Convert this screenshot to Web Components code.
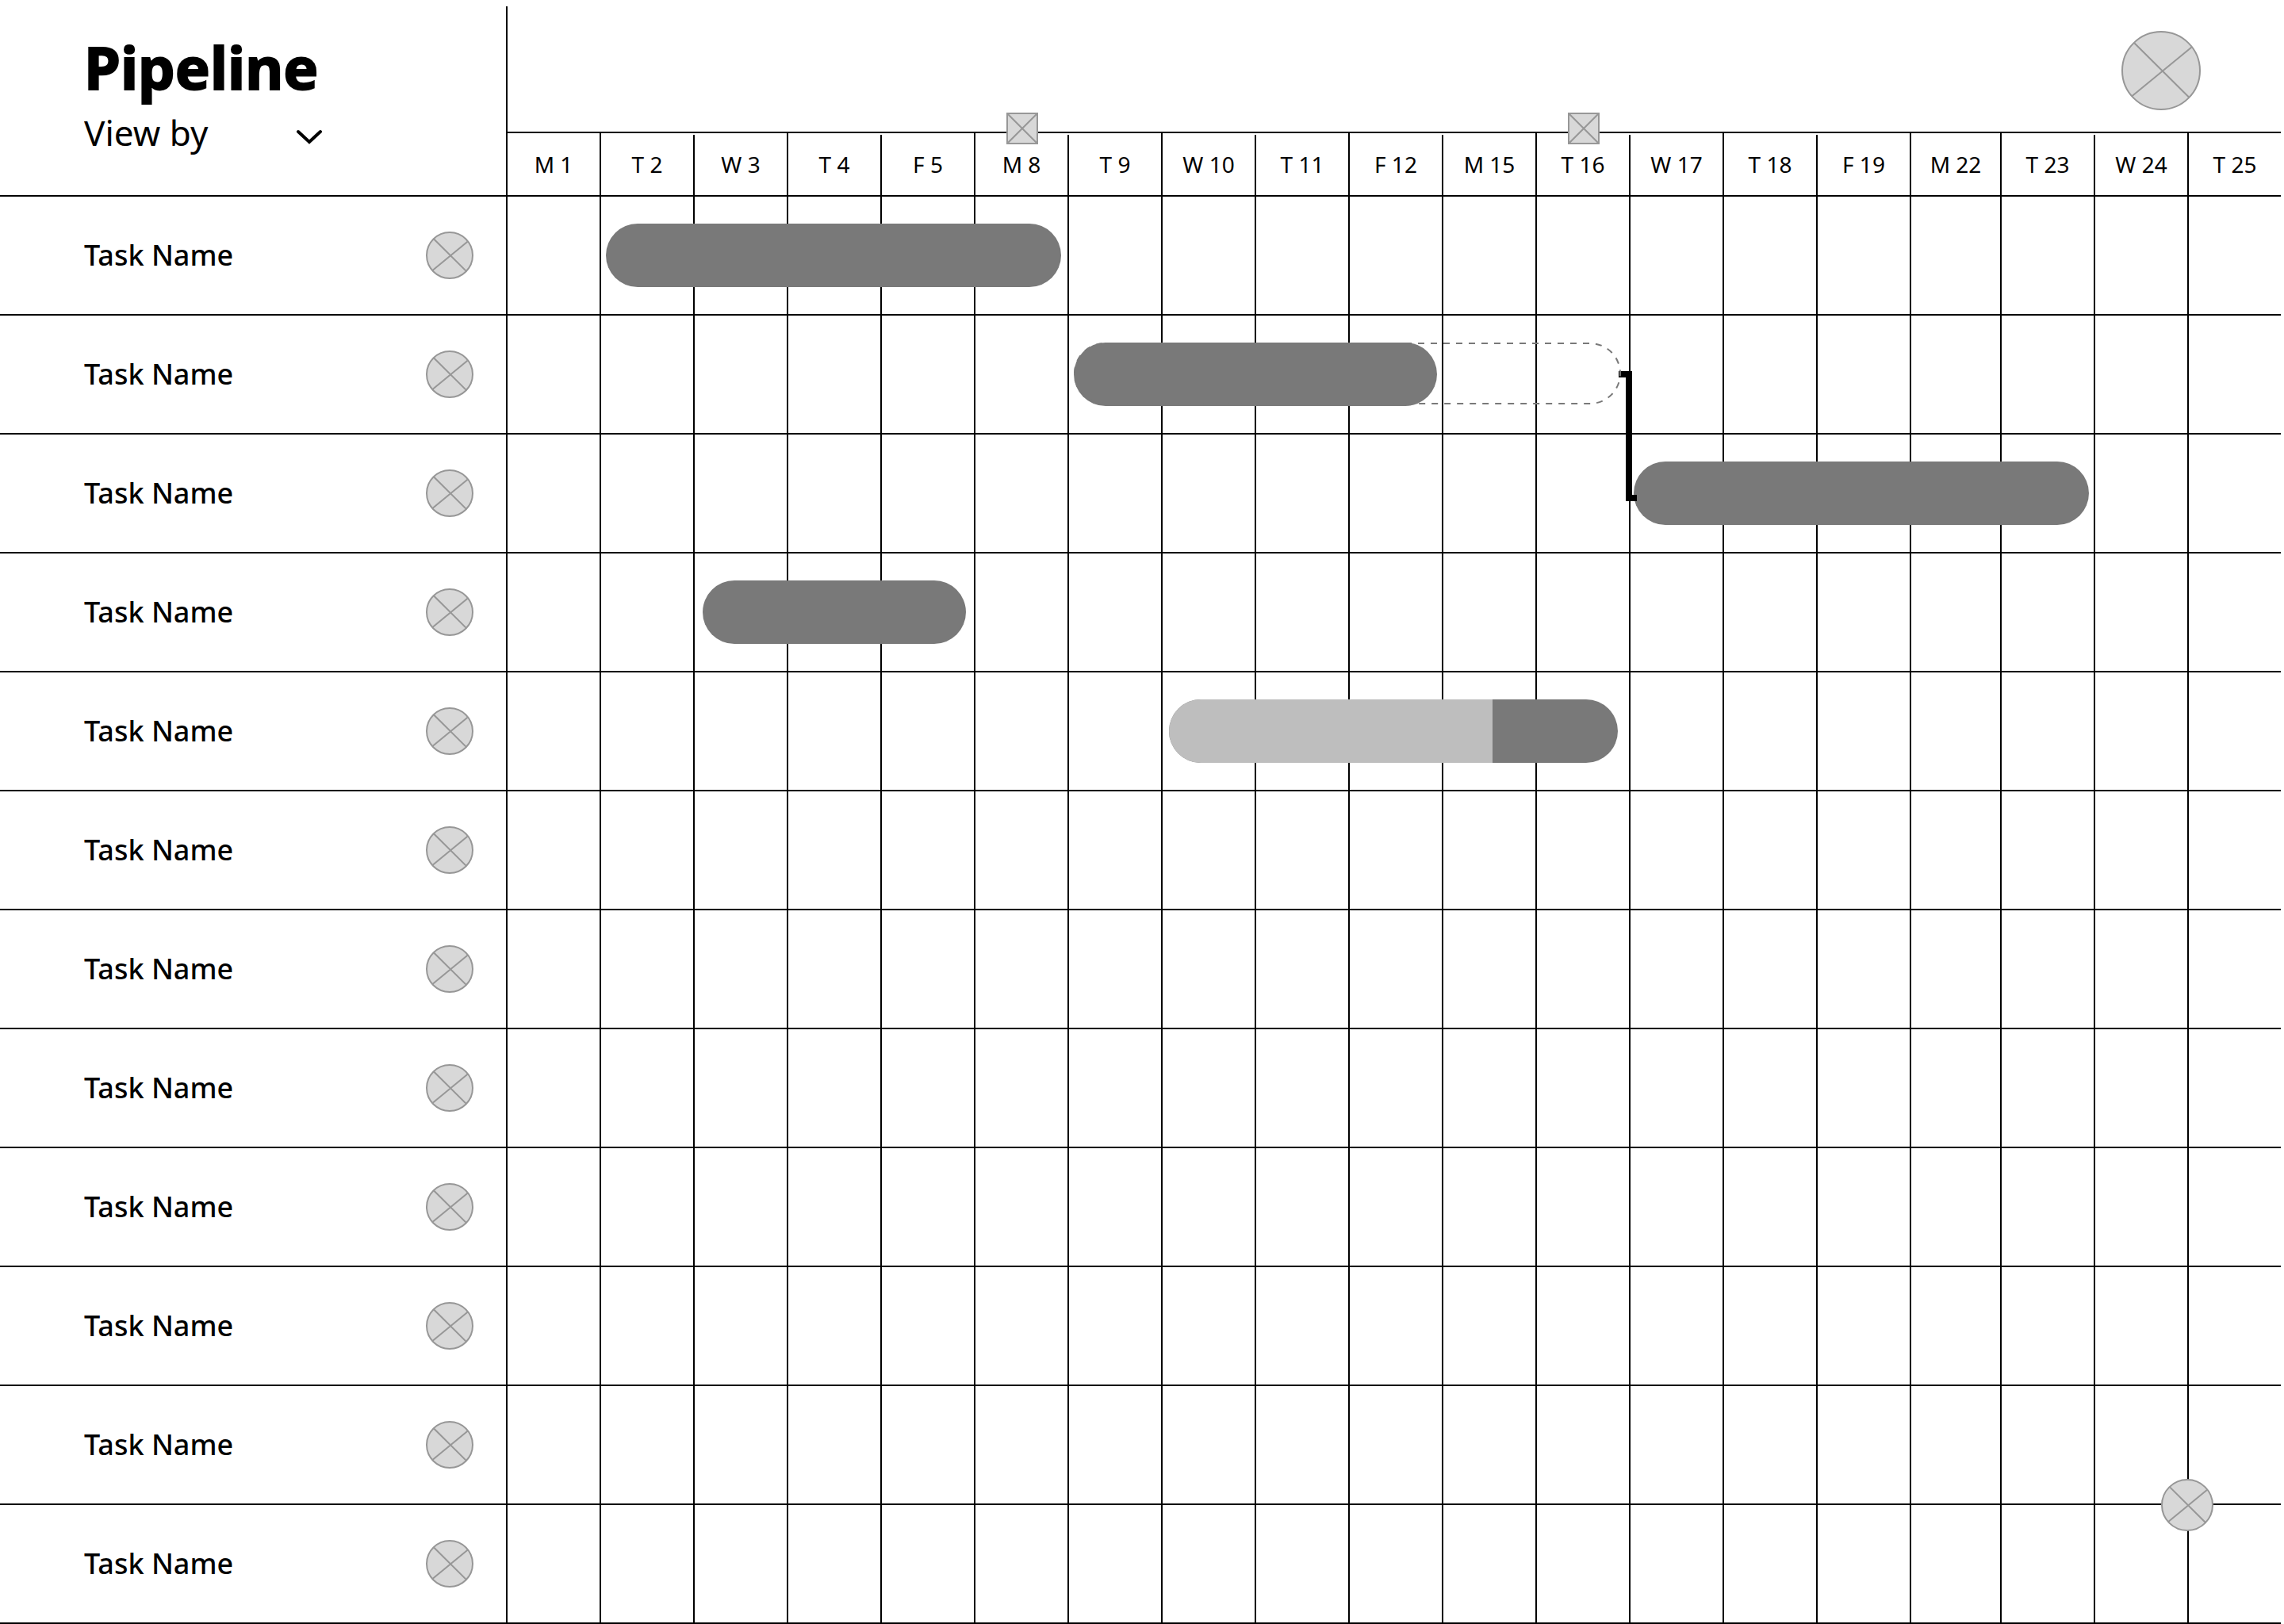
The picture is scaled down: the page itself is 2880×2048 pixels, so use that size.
<!DOCTYPE html>
<html lang="en">
<head>
<meta charset="utf-8">
<title>Pipeline</title>
<style>
  body {
    margin: 0;
    padding-right: 4px;
    background: #fff;
    color: #000;
    font-family: "Noto Sans", "Open Sans", sans-serif;
    --line: 2px solid #000;
    --side: 638px;
    --inset: 106px;
    /* the M 22 column is slightly narrower than the others */
    --days: repeat(15, minmax(0, 118fr)) minmax(0, 114fr) repeat(3, minmax(0, 118fr));
  }
</style>
</head>
<body>
<pipeline-board>
  <board-header slot="header" heading="Pipeline">
    <day-label>M 1</day-label>
    <day-label>T 2</day-label>
    <day-label short>W 3</day-label>
    <day-label>T 4</day-label>
    <day-label short>F 5</day-label>
    <day-label milestone>M 8</day-label>
    <day-label short>T 9</day-label>
    <day-label>W 10</day-label>
    <day-label short>T 11</day-label>
    <day-label>F 12</day-label>
    <day-label short>M 15</day-label>
    <day-label milestone>T 16</day-label>
    <day-label short>W 17</day-label>
    <day-label>T 18</day-label>
    <day-label short>F 19</day-label>
    <day-label>M 22</day-label>
    <day-label>T 23</day-label>
    <day-label short>W 24</day-label>
    <day-label>T 25</day-label>
  </board-header>
  <task-row><span slot="name">Task Name</span><task-bar from="2" to="6" before="8" after="8"></task-bar></task-row>
  <task-row><span slot="name">Task Name</span><task-link day="12"></task-link><task-bar projected from="7" to="12" before="8" after="10"></task-bar><task-bar from="7" to="10" before="8" after="6"></task-bar></task-row>
  <task-row><span slot="name">Task Name</span><task-bar from="13" to="17" before="6" after="6"></task-bar></task-row>
  <task-row><span slot="name">Task Name</span><task-bar from="3" to="5" before="12" after="10"></task-bar></task-row>
  <task-row><span slot="name">Task Name</span><task-bar from="8" to="12" before="10" after="14" progress="72"></task-bar></task-row>
  <task-row><span slot="name">Task Name</span></task-row>
  <task-row><span slot="name">Task Name</span></task-row>
  <task-row><span slot="name">Task Name</span></task-row>
  <task-row><span slot="name">Task Name</span></task-row>
  <task-row><span slot="name">Task Name</span></task-row>
  <task-row><span slot="name">Task Name</span></task-row>
  <task-row><span slot="name">Task Name</span></task-row>
</pipeline-board>

<script>
const define = (name, markup, setup) => {
  const template = document.createElement('template');
  template.innerHTML = markup;
  customElements.define(name, class extends HTMLElement {
    constructor() {
      super();
      this.attachShadow({ mode: 'open' }).append(template.content.cloneNode(true));
    }
    connectedCallback() {
      if (setup) setup(this, this.shadowRoot);
    }
  });
};

/* Round placeholder with a cross */
define('round-mark', `
  <style>
    :host { display: block; flex: none; width: 60px; height: 60px; }
    svg { display: block; width: 100%; height: 100%; overflow: visible; }
    circle { r: calc(50% - 1px); fill: #d8d8d8; }
    circle, path { stroke: #979797; stroke-width: 2px; vector-effect: non-scaling-stroke; }
  </style>
  <svg aria-hidden="true">
    <circle cx="50%" cy="50%"/>
    <svg viewBox="0 0 100 100"><path d="M16 15L85.5 84M88.5 20.5L13 82.5" fill="none"/></svg>
  </svg>`);

/* Square placeholder that marks a milestone */
define('square-mark', `
  <style>
    :host { display: block; width: 40px; height: 40px; }
    svg { display: block; }
  </style>
  <svg width="40" height="40" viewBox="0 0 40 40" aria-hidden="true" fill="#d8d8d8" stroke="#979797" stroke-width="2">
    <path d="M1 1H39V39H1ZM1 1L39 39M39 1L1 39"/>
  </svg>`);

define('day-label', `
  <style>
    :host { display: flex; position: relative; align-items: center; justify-content: center;
            border-left: var(--line); font-size: 28px; line-height: 38px; white-space: nowrap; }
    :host([short]) { margin-top: 2px; padding-bottom: 2px; }
    square-mark { display: none; position: absolute; top: -26px; left: calc(50% - 19px); }
    :host([milestone]) square-mark { display: block; }
  </style>
  <square-mark></square-mark><slot></slot>`,
  host => host.setAttribute('role', 'columnheader'));

define('board-header', `
  <style>
    :host { display: grid; grid-template-columns: var(--side) minmax(0, 1fr); min-height: 246px; }
    .side { padding: 45px 0 0 var(--inset); }
    /* the outline makes the letters a little heavier than bold */
    h1 { margin: 0 0 12px; font-size: 74px; font-weight: 700; line-height: 80px;
         -webkit-text-stroke: 2px #000; stroke-linejoin: round; }
    .view { display: grid; width: 300px; align-items: center; }
    select, .view svg { grid-area: 1 / 1; }
    select { appearance: none; margin: 0; padding: 0; border: 0; background: none; color: inherit;
             font: inherit; font-size: 44px; line-height: 60px; height: 60px; }
    .view svg { justify-self: end; margin-top: 12px; pointer-events: none; }
    .main { display: flex; flex-direction: column; padding-top: 8px; }
    .top { display: flex; justify-content: flex-end; align-items: flex-start; height: 158px;
           box-sizing: border-box; padding: 31px 101px 0 0; border-left: var(--line); }
    button { padding: 0; border: 0; background: none; border-radius: 50%; }
    round-mark { width: 100px; height: 100px; }
    .days { flex: 1; display: grid; grid-template-columns: var(--days); position: relative; border-top: var(--line); }
  </style>
  <div class="side">
    <h1></h1>
    <div class="view">
      <select aria-label="View by"><option>View by</option></select>
      <svg width="34" height="22" viewBox="0 0 34 22" fill="none" stroke="#000" stroke-width="4" stroke-linecap="round" stroke-linejoin="miter" aria-hidden="true"><path d="M4 4L18 17L32 4"/></svg>
    </div>
  </div>
  <div class="main">
    <div class="top"><button type="button" aria-label="Account"><round-mark></round-mark></button></div>
    <div class="days" role="row"><slot></slot></div>
  </div>`,
  (host, root) => { root.querySelector('h1').textContent = host.getAttribute('heading'); });

define('task-row', `
  <style>
    :host { display: grid; grid-template-columns: var(--side) minmax(0, 1fr); box-sizing: border-box;
            min-height: 150px; border-top: var(--line); }
    .side { display: flex; align-items: center; justify-content: space-between;
            padding: 0 41px 0 var(--inset); font-size: 36px; font-weight: 500; line-height: 50px; }
    .track { display: grid; grid-template-columns: var(--days); grid-template-rows: 1fr; position: relative; }
    .cell { grid-row: 1; border-left: var(--line); }
  </style>
  <div class="side"><slot name="name"></slot><round-mark></round-mark></div>
  <div class="track"><slot></slot></div>`,
  (host, root) => {
    host.setAttribute('role', 'row');
    const track = root.querySelector('.track');
    for (let day = 19; day >= 1; day--) {
      const cell = document.createElement('div');
      cell.className = 'cell';
      cell.style.gridColumn = day;
      track.prepend(cell);
    }
  });

define('task-bar', `
  <style>
    :host { display: block; grid-row: 1; align-self: center; height: 80px; border-radius: 40px;
            overflow: hidden; background: #797979; }
    :host([projected]) { background: none; border-radius: 0; z-index: 2; }
    .done { height: 100%; background: #bebebe; }
    svg { display: none; width: 100%; height: 78px; }
    :host([projected]) svg { display: block; }
    rect { width: calc(100% - 2px); height: 76px; fill: none; stroke: #797979; stroke-width: 2px;
           stroke-dasharray: 8 8; stroke-dashoffset: 5; }
    :host(:not([progress])) .done { display: none; }
  </style>
  <div class="done"></div>
  <svg aria-hidden="true"><rect x="1" y="1" rx="38"/></svg>`,
  (host, root) => {
    const read = name => Number(host.getAttribute(name));
    host.style.gridColumn = `${read('from')} / ${read('to') + 1}`;
    host.style.marginLeft = `${read('before')}px`;
    host.style.marginRight = `${read('after')}px`;
    if (!host.hasAttribute('projected')) host.style.zIndex = 0;
    root.querySelector('.done').style.width = `${read('progress')}%`;
  });

/* Dependency connector that runs down from one task to the next */
define('task-link', `
  <style>
    :host { position: absolute; z-index: 1; top: 70px; right: -10px; width: 23px; height: 164px; }
    svg { display: block; }
  </style>
  <svg width="23" height="164" viewBox="0 0 23 164" aria-hidden="true"><path d="M0 0H17V156H23V164H9V8H0Z"/></svg>`,
  host => { host.style.gridColumn = `${host.getAttribute('day')} / span 1`; });

define('pipeline-board', `
  <style>
    :host { display: block; position: relative; border-bottom: var(--line); }
    button { position: absolute; right: 85px; bottom: 115px; z-index: 3; padding: 0; border: 0;
             background: none; border-radius: 50%; }
    round-mark { width: 66px; height: 66px; }
  </style>
  <slot name="header"></slot>
  <slot></slot>
  <button type="button" aria-label="Add"><round-mark></round-mark></button>`,
  host => host.setAttribute('role', 'table'));
</script>
</body>
</html>
